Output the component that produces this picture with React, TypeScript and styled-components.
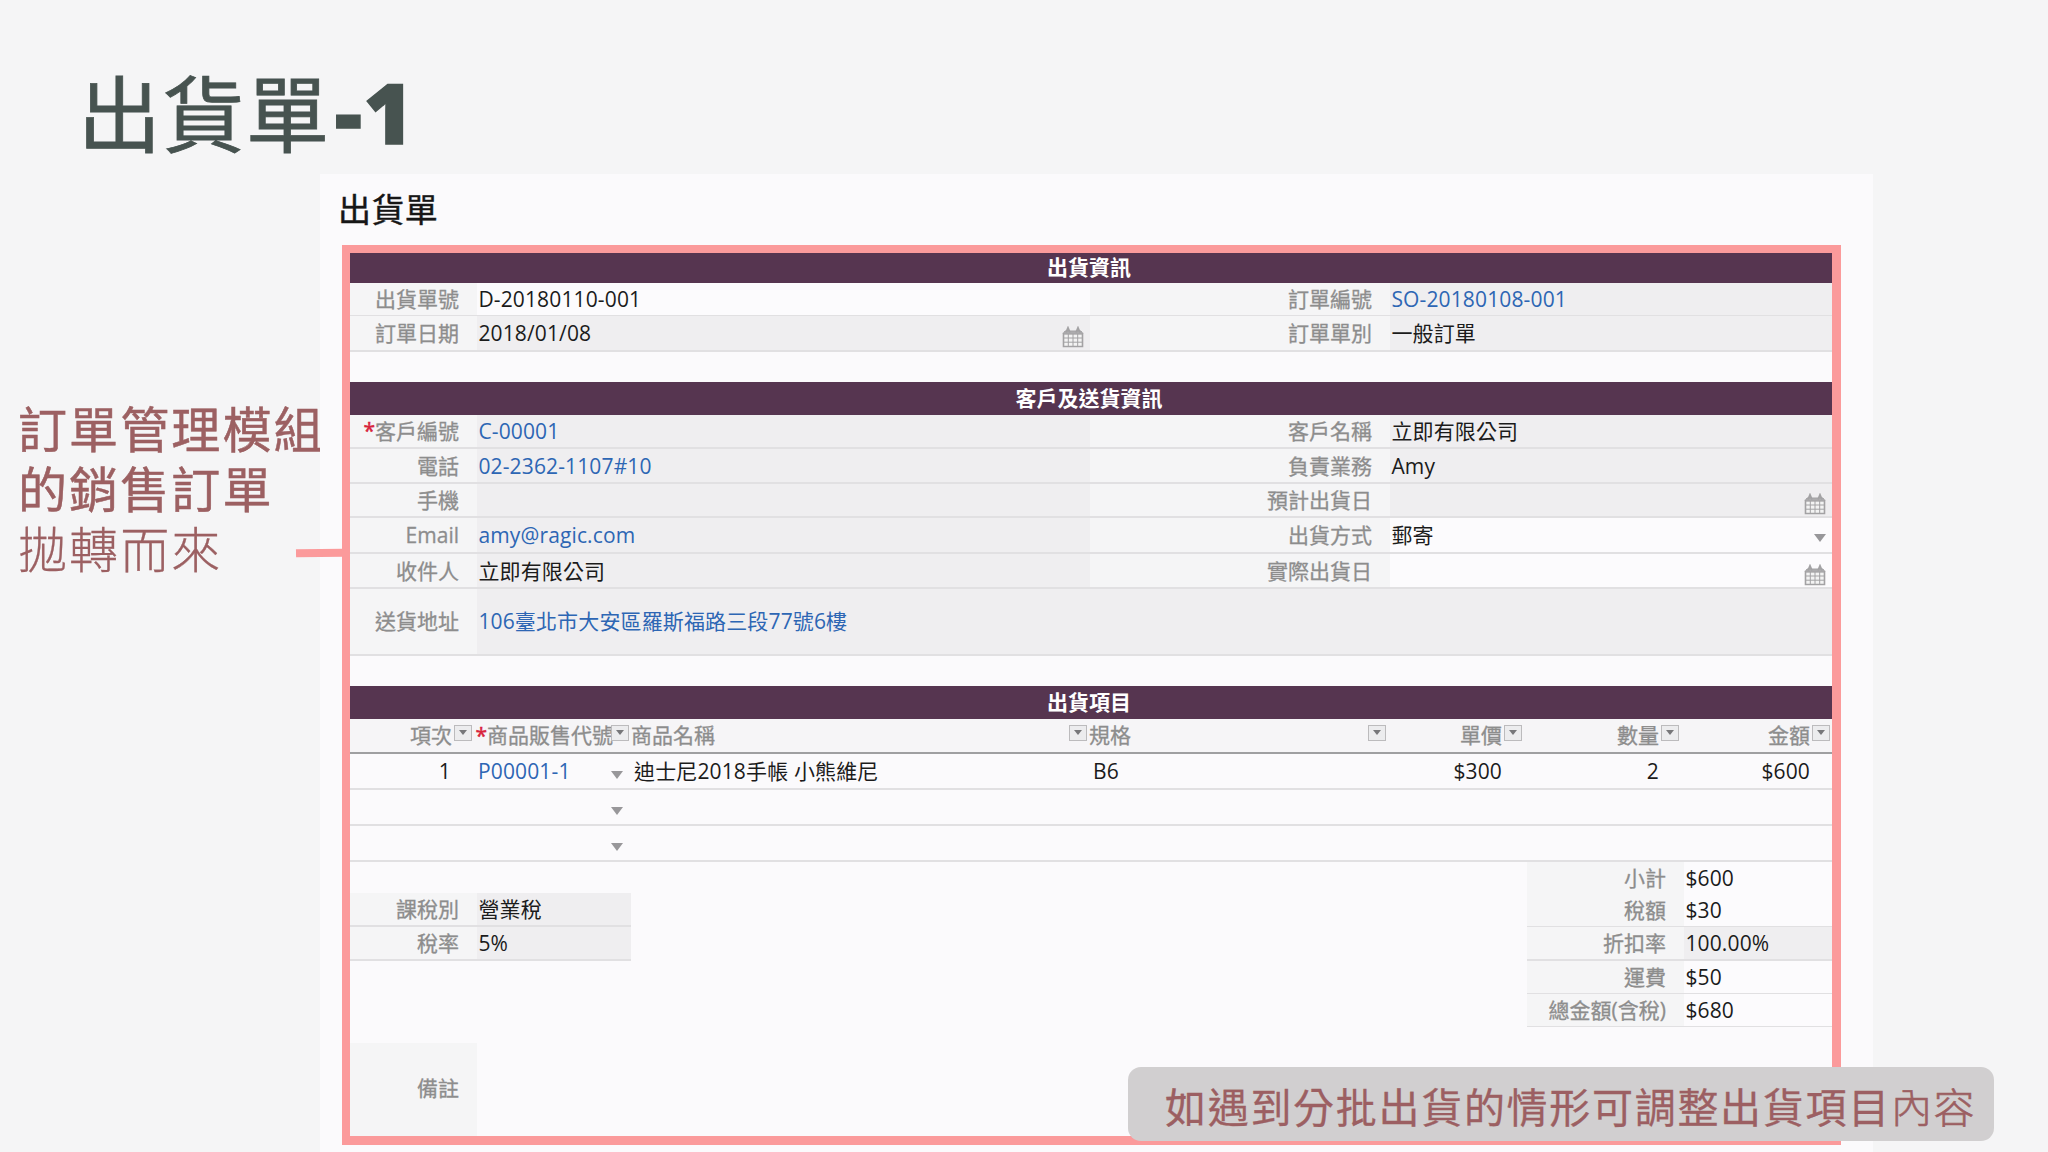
import React from "react";
import styled, { createGlobalStyle, css } from "styled-components";

const GlobalStyle = createGlobalStyle`
  *, *::before, *::after { box-sizing: border-box; }
  body {
    margin: 0;
    background: #f5f5f6;
    font-family: "Open Sans", "Noto Sans CJK TC", sans-serif;
  }
`;

const cjk = `"Noto Sans CJK TC", sans-serif`;
const pink = "#fb9a9b";
const rule = "#e1e0e2";

const Slide = styled.main`
  position: relative;
  display: flex;
  flex-direction: column;
  width: 2048px;
  height: 1152px;
  overflow: hidden;
  background: #f5f5f6;
`;

const SlideHeader = styled.header`
  flex: none;
  display: flex;
  height: 174px;
  padding: 50px 0 0 78px;
`;

const SlideTitle = styled.h1`
  margin: 0;
  font: 400 83px/120px ${cjk};
  letter-spacing: 1px;
  color: #475350;
  -webkit-text-stroke: 0.8px #475350;
  white-space: nowrap;
`;

const TitleNumber = styled.span`
  margin-left: 5px;
  font-family: "Open Sans", sans-serif;
  font-weight: 800;
  font-size: 84px;
  line-height: 1;
  letter-spacing: 2px;
  vertical-align: 2px;
  -webkit-text-stroke: 1.5px #475350;
`;

const Body = styled.div`
  display: flex;
  flex: 1;
  min-height: 0;
`;

const Aside = styled.aside`
  flex: none;
  width: 320px;
  padding: 223px 0 0 18px;
`;

const AsideLine = styled.p<{ $strong?: boolean }>`
  margin: 0;
  font: ${(p) => (p.$strong ? 400 : 300)} 49px/60px ${cjk};
  letter-spacing: 2.1px;
  color: #9c6062;
  white-space: nowrap;
  -webkit-text-stroke: ${(p) => (p.$strong ? 0.5 : 0.3)}px #9c6062;
`;

const Sheet = styled.section`
  flex: none;
  width: 1553px;
  padding: 0 32px 0 22px;
  background: #fbfafc;
`;

const SheetTitle = styled.h2`
  margin: 0 0 0 -4px;
  height: 71px;
  font: 400 33px/68px ${cjk};
  letter-spacing: 0.4px;
  -webkit-text-stroke: 0.4px #161616;
  color: #161616;
`;

const Frame = styled.div`
  height: 900px;
  border: solid ${pink};
  border-width: 8px 9px 9px 8px;
`;

const SectionBar = styled.h3<{ $h?: number }>`
  margin: 0;
  padding-right: 4px;
  height: ${(p) => p.$h ?? 33}px;
  font-size: 21px;
  font-weight: 700;
  line-height: ${(p) => (p.$h ?? 33) - 1}px;
  text-align: center;
  color: #fff;
  background: #563550;
`;

const Spacer = styled.div<{ $h: number }>`
  height: ${(p) => p.$h}px;
`;

const FieldRow = styled.div<{ $h: number }>`
  display: grid;
  grid-template-columns: 127px 613px 300px 1fr;
  height: ${(p) => p.$h}px;
  border-bottom: 2px solid ${rule};
  font-size: 21px;
`;

const Label = styled.div<{ $lift?: number }>`
  display: flex;
  align-items: center;
  justify-content: flex-end;
  padding: 0 18px ${(p) => p.$lift ?? 2}px 0;
  color: #8d8d8d;
  -webkit-text-stroke: 0.3px #8d8d8d;
  background: #f5f5f6;
  white-space: nowrap;
`;

type Tone = "link" | "text";

const Value = styled.div<{ $tone?: Tone; $open?: boolean; $wide?: boolean; $lift?: number }>`
  display: flex;
  align-items: center;
  justify-content: space-between;
  padding: 0 6px ${(p) => p.$lift ?? 0}px 1.4px;
  letter-spacing: 0.14px;
  color: ${(p) => (p.$tone === "link" ? "#2d66b4" : "#1b1b1b")};
  background: ${(p) => (p.$open ? "#fcfbfd" : "#efeef0")};
  white-space: nowrap;
  ${(p) => p.$wide && css`grid-column: 2 / -1;`}
`;

const Required = styled.span`
  color: #d8243c;
  -webkit-text-stroke: 0.5px #d8243c;
`;

const Triangle = styled.span`
  width: 0;
  height: 0;
  margin-top: 7px;
  border: 6.5px solid transparent;
  border-top: 8px solid #98979a;
  border-bottom: 0;
`;

const CalendarSvg = styled.svg`
  flex: none;
  margin-top: 8px;
`;

const Calendar = () => (
  <CalendarSvg width="22" height="22" viewBox="0 0 22 22" fill="none" stroke="#a3a2a4">
    <path d="M1.5 7.5h19v13h-19z" strokeWidth="1.6" fill="#f3f3f3" />
    <path d="M1 8 3 5h16l2 3z" fill="#adacae" strokeWidth="1" />
    <path d="M4 6.5 6 1.8 8 6.5M14 6.5l2-4.7 2 4.7" strokeWidth="1.8" />
    <path d="M6.3 8v12M11 8v12M15.7 8v12M2 12h18M2 16.2h18" strokeWidth="1" />
  </CalendarSvg>
);

const ItemGrid = styled.div<{ $head?: boolean }>`
  display: grid;
  grid-template-columns: 125px 155px 458px 299px 136px 157px 1fr;
  height: ${(p) => (p.$head ? 35 : 36)}px;
  border-bottom: 2px solid ${(p) => (p.$head ? "#9f9fa1" : rule)};
  font-size: 21px;
  ${(p) => p.$head && css`background: #f6f5f7;`}
`;

const HeadCell = styled.div<{ $end?: boolean; $pr?: number }>`
  display: flex;
  align-items: center;
  justify-content: ${(p) => (p.$end ? "flex-end" : "space-between")};
  gap: 2px;
  padding: 0 ${(p) => p.$pr ?? 1}px 3px ${(p) => (p.$end ? 0 : 1)}px;
  color: #8d8d8d;
  -webkit-text-stroke: 0.3px #8d8d8d;
  white-space: nowrap;
`;

const FilterBox = styled.span`
  flex: none;
  display: grid;
  place-items: center;
  width: 18px;
  height: 16px;
  margin: -3px 0 0 auto;
  border: 1.5px solid #bcbbbd;
  background: #ececee;

  &::after {
    content: "";
    width: 8px;
    height: 5px;
    background: #77777a;
    clip-path: polygon(0 0, 100% 0, 50% 100%);
  }
`;

const FilterTight = styled(FilterBox)`
  margin-left: 0;
`;

const FilterOver = styled(FilterBox)`
  margin-left: -4px;
`;

const ItemCell = styled.div<{ $end?: boolean; $link?: boolean; $pl?: number; $pr?: number }>`
  display: flex;
  align-items: center;
  justify-content: ${(p) => (p.$end ? "flex-end" : "space-between")};
  padding: 0 ${(p) => p.$pr ?? 0}px 0 ${(p) => p.$pl ?? 0}px;
  letter-spacing: 0.14px;
  color: ${(p) => (p.$link ? "#2d66b4" : "#1b1b1b")};
  white-space: nowrap;
`;

const ProductName = styled.span`
  margin-top: -3px;
`;

const Footer = styled.div`
  display: flex;
  justify-content: space-between;
  height: 274px;
`;

const FooterLeft = styled.div`
  display: flex;
  flex-direction: column;
  width: 281px;
  padding-top: 31px;
`;

const TotalsColumn = styled.div`
  width: 305px;
`;

const PairRow = styled.div<{ $h: number; $label: number }>`
  display: grid;
  grid-template-columns: ${(p) => p.$label}px 1fr;
  height: ${(p) => p.$h}px;
  border-bottom: 2px solid ${rule};
  font-size: 21px;
`;

const Remark = styled.div`
  display: grid;
  width: 127px;
  height: 93px;
  margin-top: 82px;
  font-size: 21px;
`;

const Connector = styled.div`
  position: absolute;
  left: 296px;
  top: 549px;
  width: 48px;
  height: 8px;
  background: ${pink};
  transform: rotate(-0.8deg);
`;

const Note = styled.div`
  position: absolute;
  left: 1128px;
  top: 1067px;
  width: 866px;
  height: 74px;
  padding: 2px 0 0 37px;
  border-radius: 13px;
  background: #d1cfd0;
  font: 400 41px/73px ${cjk};
  letter-spacing: 1.7px;
  color: #9c5f62;
  -webkit-text-stroke: 0.3px #9c5f62;
  white-space: nowrap;
`;

const NoteLight = styled.span`
  font-weight: 300;
  -webkit-text-stroke: 0.6px #9c5f62;
`;

type Field = {
  label: string;
  required?: boolean;
  value?: string;
  tone?: Tone;
  open?: boolean;
  icon?: "calendar" | "select";
};

const shipping: { h: number; fields: Field[] }[] = [
  {
    h: 33,
    fields: [
      { label: "出貨單號", value: "D-20180110-001", open: true },
      { label: "訂單編號", value: "SO-20180108-001", tone: "link" },
    ],
  },
  {
    h: 36,
    fields: [
      { label: "訂單日期", value: "2018/01/08", icon: "calendar" },
      { label: "訂單單別", value: "一般訂單" },
    ],
  },
];

const customer: { h: number; fields: Field[] }[] = [
  {
    h: 34,
    fields: [
      { label: "客戶編號", required: true, value: "C-00001", tone: "link" },
      { label: "客戶名稱", value: "立即有限公司" },
    ],
  },
  {
    h: 35,
    fields: [
      { label: "電話", value: "02-2362-1107#10", tone: "link" },
      { label: "負責業務", value: "Amy" },
    ],
  },
  { h: 34, fields: [{ label: "手機" }, { label: "預計出貨日", icon: "calendar" }] },
  {
    h: 36,
    fields: [
      { label: "Email", value: "amy@ragic.com", tone: "link" },
      { label: "出貨方式", value: "郵寄", open: true, icon: "select" },
    ],
  },
  {
    h: 35,
    fields: [
      { label: "收件人", value: "立即有限公司" },
      { label: "實際出貨日", open: true, icon: "calendar" },
    ],
  },
];

const totals = [
  { h: 32, label: "小計", value: "$600", open: true },
  { h: 33, label: "稅額", value: "$30", open: true },
  { h: 34, label: "折扣率", value: "100.00%", open: false },
  { h: 33, label: "運費", value: "$50", open: true },
  { h: 33, label: "總金額(含稅)", value: "$680", open: true },
];

const hanLift = (text?: string) => (text && /[\u4e00-\u9fff]/.test(text) ? 2 : 0);

const Fields = ({ rows }: { rows: { h: number; fields: Field[] }[] }) => (
  <>
    {rows.map((row) => (
      <FieldRow key={row.fields[0].label} $h={row.h}>
        {row.fields.map((f) => (
          <React.Fragment key={f.label}>
            <Label $lift={hanLift(f.label)}>
              {f.required && <Required>*</Required>}
              {f.label}
            </Label>
            <Value $tone={f.tone} $open={f.open} $lift={hanLift(f.value)}>
              <span>{f.value}</span>
              {f.icon === "calendar" && <Calendar />}
              {f.icon === "select" && <Triangle />}
            </Value>
          </React.Fragment>
        ))}
      </FieldRow>
    ))}
  </>
);

export default function App() {
  return (
    <Slide>
      <GlobalStyle />
      <SlideHeader>
        <SlideTitle>
          出貨單<TitleNumber>-1</TitleNumber>
        </SlideTitle>
      </SlideHeader>
      <Body>
        <Aside>
          <AsideLine $strong>訂單管理模組</AsideLine>
          <AsideLine $strong>的銷售訂單</AsideLine>
          <AsideLine>拋轉而來</AsideLine>
        </Aside>
        <Sheet>
          <SheetTitle>出貨單</SheetTitle>
          <Frame>
            <SectionBar $h={30}>出貨資訊</SectionBar>
            <Fields rows={shipping} />
            <Spacer $h={30} />
            <SectionBar>客戶及送貨資訊</SectionBar>
            <Fields rows={customer} />
            <FieldRow $h={67}>
              <Label $lift={4}>送貨地址</Label>
              <Value $tone="link" $wide $lift={4}>
                106臺北市大安區羅斯福路三段77號6樓
              </Value>
            </FieldRow>
            <Spacer $h={30} />
            <SectionBar>出貨項目</SectionBar>
            <ItemGrid $head>
              <HeadCell $end $pr={3}>
                項次
                <FilterTight />
              </HeadCell>
              <HeadCell $end>
                <span>
                  <Required>*</Required>商品販售代號
                </span>
                <FilterOver />
              </HeadCell>
              <HeadCell>
                商品名稱
                <FilterBox />
              </HeadCell>
              <HeadCell>
                規格
                <FilterBox />
              </HeadCell>
              <HeadCell $end>
                單價
                <FilterTight />
              </HeadCell>
              <HeadCell $end>
                數量
                <FilterTight />
              </HeadCell>
              <HeadCell $end $pr={2}>
                金額
                <FilterTight />
              </HeadCell>
            </ItemGrid>
            <ItemGrid>
              <ItemCell $end $pr={24}>1</ItemCell>
              <ItemCell $link $pl={3} $pr={7}>
                P00001-1
                <Triangle />
              </ItemCell>
              <ItemCell $pl={4}>
                <ProductName>迪士尼2018手帳 小熊維尼</ProductName>
              </ItemCell>
              <ItemCell $pl={5}>B6</ItemCell>
              <ItemCell $end $pr={21}>$300</ItemCell>
              <ItemCell $end $pr={21}>2</ItemCell>
              <ItemCell $end $pr={22}>$600</ItemCell>
            </ItemGrid>
            {[0, 1].map((n) => (
              <ItemGrid key={n}>
                <ItemCell />
                <ItemCell $end $pr={7}>
                  <Triangle />
                </ItemCell>
              </ItemGrid>
            ))}
            <Footer>
              <FooterLeft>
                <PairRow $h={34} $label={127}>
                  <Label>課稅別</Label>
                  <Value $lift={2}>營業稅</Value>
                </PairRow>
                <PairRow $h={34} $label={127}>
                  <Label>稅率</Label>
                  <Value>5%</Value>
                </PairRow>
                <Remark>
                  <Label $lift={6}>備註</Label>
                </Remark>
              </FooterLeft>
              <TotalsColumn>
                {totals.map((t) => (
                  <PairRow key={t.label} $h={t.h} $label={157}>
                    <Label>{t.label}</Label>
                    <Value $open={t.open}>{t.value}</Value>
                  </PairRow>
                ))}
              </TotalsColumn>
            </Footer>
          </Frame>
        </Sheet>
      </Body>
      <Connector />
      <Note>
        如遇到分批出貨的情形可調整出貨項目<NoteLight>內容</NoteLight>
      </Note>
    </Slide>
  );
}
